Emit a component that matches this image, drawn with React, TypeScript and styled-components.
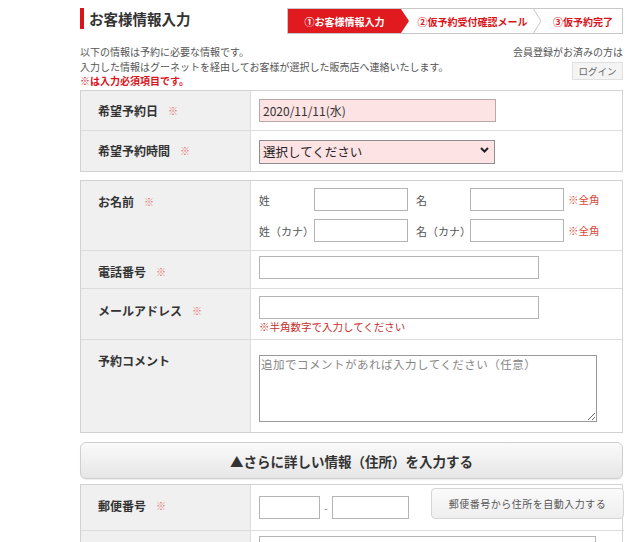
import React from "react";
import styled, { createGlobalStyle } from "styled-components";

const Global = createGlobalStyle`
  html, body { margin: 0; padding: 0; background: #fff; }
  body { font-family: "Noto Sans CJK JP", "Noto Sans", sans-serif; color: #333; }
  * { box-sizing: border-box; }
`;

const RED = "#d8141b";

const Page = styled.div`
  width: 640px;
  padding: 8px 17px 0 80px;
`;

const TopRow = styled.div`
  display: flex;
  justify-content: space-between;
  align-items: flex-start;
  height: 37px;
`;

const Title = styled.h1`
  margin: 0;
  display: flex;
  align-items: center;
  gap: 5px;
  font-size: 14.5px;
  font-weight: 700;
  line-height: 20px;
  color: #333;
  &::before {
    content: "";
    display: block;
    width: 4px;
    height: 21px;
    background: ${RED};
  }
`;

const Steps = styled.div`
  display: flex;
  width: 336px;
  height: 26px;
  border: 1px solid #c8c8c8;
  background: #fff;
`;

const Step = styled.div<{ $active?: boolean; $w: number }>`
  position: relative;
  width: ${(p) => p.$w}px;
  display: flex;
  align-items: center;
  justify-content: center;
  font-size: 10px;
  font-weight: 700;
  color: ${(p) => (p.$active ? "#fff" : RED)};
  background: ${(p) => (p.$active ? "#e01a1f" : "transparent")};
  padding-left: ${(p) => (p.$active ? 0 : 8)}px;
`;

const ActiveArrow = styled.span`
  position: absolute;
  right: -8px;
  top: 0;
  width: 0;
  height: 0;
  border-top: 12px solid transparent;
  border-bottom: 12px solid transparent;
  border-left: 8px solid #e01a1f;
  z-index: 1;
`;

const Chevron = styled.svg`
  position: absolute;
  right: -6px;
  top: -1px;
  z-index: 1;
`;

const IntroRow = styled.div`
  display: flex;
  justify-content: space-between;
  align-items: flex-start;
  height: 45px;
`;

const Intro = styled.div`
  font-size: 10px;
  line-height: 14.5px;
  color: #555;
`;

const Required = styled.div`
  color: ${RED};
  font-weight: 700;
`;

const LoginBox = styled.div`
  display: flex;
  flex-direction: column;
  align-items: flex-end;
  gap: 3px;
  font-size: 10px;
  color: #555;
  line-height: 14px;
`;

const LoginButton = styled.button`
  width: 51px;
  height: 18px;
  border: 1px solid #e0e0e0;
  background: #f4f4f4;
  font-family: inherit;
  font-size: 9.5px;
  color: #666;
  padding: 0;
`;

const Table = styled.div<{ $mt?: number }>`
  display: grid;
  grid-template-columns: 170px 1fr;
  border: 1px solid #d2d2d2;
  margin-top: ${(p) => p.$mt ?? 0}px;
`;

const Label = styled.div<{ $h: number; $center?: boolean; $last?: boolean }>`
  height: ${(p) => p.$h}px;
  background: #f0f0f0;
  border-right: 1px solid #dcdcdc;
  border-bottom: ${(p) => (p.$last ? "none" : "1px solid #dcdcdc")};
  padding: ${(p) => (p.$center ? "0 0 0 17px" : "12px 0 0 17px")};
  display: flex;
  align-items: ${(p) => (p.$center ? "center" : "flex-start")};
  gap: 10px;
  font-size: 12px;
  font-weight: 700;
  color: #333;
  line-height: 18px;
`;

const Mark = styled.span`
  color: #e57373;
  font-size: 10px;
  font-weight: 400;
`;

const Value = styled.div<{ $last?: boolean; $pt?: number }>`
  border-bottom: ${(p) => (p.$last ? "none" : "1px solid #dcdcdc")};
  padding: ${(p) => p.$pt ?? 8}px 0 0 8px;
  display: flex;
  flex-direction: column;
  gap: 8px;
`;

const Input = styled.input<{ $w: number; $pink?: boolean }>`
  width: ${(p) => p.$w}px;
  height: 23px;
  border: 1px solid ${(p) => (p.$pink ? "#b8a8a8" : "#b4b4b4")};
  background: ${(p) => (p.$pink ? "#fde3e3" : "#fff")};
  font-family: "Noto Sans CJK JP", sans-serif;
  font-size: 12px;
  color: #333;
  padding: 0 3px;
  outline: none;
`;

const SelectWrap = styled.div`
  position: relative;
  width: 236px;
`;

const Select = styled.select`
  appearance: none;
  width: 236px;
  height: 24px;
  border: 1px solid #8e8e8e;
  background: #fde3e3;
  font-family: "Noto Sans CJK JP", sans-serif;
  font-size: 12.5px;
  color: #222;
  padding: 0 3px;
  outline: none;
`;

const SelectArrow = styled.svg`
  position: absolute;
  right: 6px;
  top: 9px;
  pointer-events: none;
`;

const NameLine = styled.div`
  display: flex;
  align-items: center;
  height: 23px;
`;

const NameLabel = styled.span<{ $w: number; $pl?: number }>`
  width: ${(p) => p.$w}px;
  padding-left: ${(p) => p.$pl ?? 0}px;
  font-size: 11px;
  color: #555;
`;

const Note = styled.span`
  margin-left: 4px;
  font-size: 10.5px;
  color: #d94a3a;
`;

const Hint = styled.div`
  margin-top: -8px;
  font-size: 10.5px;
  color: #c9302c;
`;

const TextArea = styled.textarea`
  width: 338px;
  height: 67px;
  border: 1px solid #999;
  font-family: "Noto Sans CJK JP", sans-serif;
  font-size: 11.5px;
  letter-spacing: 0.5px;
  padding: 0 1px;
  color: #333;
  resize: both;
  outline: none;
  &::placeholder { color: #888; }
`;

const ExpandButton = styled.button`
  display: block;
  width: 543px;
  height: 37px;
  margin-top: 9px;
  border: 1px solid #cfcfcf;
  border-radius: 6px;
  background: linear-gradient(#fafafa, #e6e6e6);
  font-family: "Noto Sans CJK JP", sans-serif;
  font-size: 13.5px;
  font-weight: 700;
  color: #333;
  box-shadow: 0 1px 1px rgba(0,0,0,0.08);
`;

const PostalLine = styled.div`
  display: flex;
  align-items: center;
`;

const Dash = styled.span`
  width: 12px;
  text-align: center;
  font-size: 10px;
  color: #777;
`;

const PostalButton = styled.button`
  margin-left: 22px;
  width: 193px;
  height: 31px;
  margin-top: -8px;
  border: 1px solid #d6d6d6;
  border-radius: 4px;
  background: linear-gradient(#fbfbfb, #eeeeee);
  font-family: "Noto Sans CJK JP", sans-serif;
  font-size: 10px;
  color: #555;
  letter-spacing: 0.5px;
  padding: 0;
`;

export default function App() {
  return (
    <Page>
      <Global />
      <TopRow>
        <Title>お客様情報入力</Title>
        <Steps>
          <Step $active $w={113}>
            ①お客様情報入力
            <ActiveArrow />
          </Step>
          <Step $w={135}>
            ②仮予約受付確認メール
            <Chevron width="10" height="26" viewBox="0 0 10 26">
              <polyline points="1,0 9,13 1,26" fill="none" stroke="#c8c8c8" strokeWidth="1" />
            </Chevron>
          </Step>
          <Step $w={86}>③仮予約完了</Step>
        </Steps>
      </TopRow>
      <IntroRow>
        <Intro>
          <div>以下の情報は予約に必要な情報です。</div>
          <div>入力した情報はグーネットを経由してお客様が選択した販売店へ連絡いたします。</div>
          <Required>※は入力必須項目です。</Required>
        </Intro>
        <LoginBox>
          <span>会員登録がお済みの方は</span>
          <LoginButton>ログイン</LoginButton>
        </LoginBox>
      </IntroRow>

      <Table>
        <Label $h={40} $center>
          希望予約日<Mark>※</Mark>
        </Label>
        <Value $pt={8}>
          <Input $w={237} $pink defaultValue="2020/11/11(水)" />
        </Value>
        <Label $h={40} $center $last>
          希望予約時間<Mark>※</Mark>
        </Label>
        <Value $last $pt={7}>
          <SelectWrap>
            <Select defaultValue="">
              <option value="">選択してください</option>
            </Select>
            <SelectArrow width="9" height="6" viewBox="0 0 9 6">
              <polyline points="1,1 4.5,4.5 8,1" fill="none" stroke="#222" strokeWidth="2" />
            </SelectArrow>
          </SelectWrap>
        </Value>
      </Table>

      <Table $mt={8}>
        <Label $h={70}>
          お名前<Mark>※</Mark>
        </Label>
        <Value $pt={7}>
          <NameLine>
            <NameLabel $w={55}>姓</NameLabel>
            <Input $w={94} />
            <NameLabel $w={62} $pl={8}>名</NameLabel>
            <Input $w={94} />
            <Note>※全角</Note>
          </NameLine>
          <NameLine>
            <NameLabel $w={55}>姓（カナ）</NameLabel>
            <Input $w={94} />
            <NameLabel $w={62} $pl={8}>名（カナ）</NameLabel>
            <Input $w={94} />
            <Note>※全角</Note>
          </NameLine>
        </Value>
        <Label $h={38}>
          電話番号<Mark>※</Mark>
        </Label>
        <Value $pt={5}>
          <Input $w={280} />
        </Value>
        <Label $h={51} style={{ paddingTop: 13 }}>
          メールアドレス<Mark>※</Mark>
        </Label>
        <Value $pt={7}>
          <Input $w={280} />
          <Hint>※半角数字で入力してください</Hint>
        </Value>
        <Label $h={92} $last>
          予約コメント
        </Label>
        <Value $last $pt={15}>
          <TextArea placeholder="追加でコメントがあれば入力してください（任意）" />
        </Value>
      </Table>

      <ExpandButton>▲さらに詳しい情報（住所）を入力する</ExpandButton>

      <Table $mt={5}>
        <Label $h={46}>
          郵便番号<Mark>※</Mark>
        </Label>
        <Value $pt={11}>
          <PostalLine>
            <Input $w={61} />
            <Dash>-</Dash>
            <Input $w={77} />
            <PostalButton>郵便番号から住所を自動入力する</PostalButton>
          </PostalLine>
        </Value>
        <Label $h={40} $last />
        <Value $last $pt={5}>
          <Input $w={337} />
        </Value>
      </Table>
    </Page>
  );
}
